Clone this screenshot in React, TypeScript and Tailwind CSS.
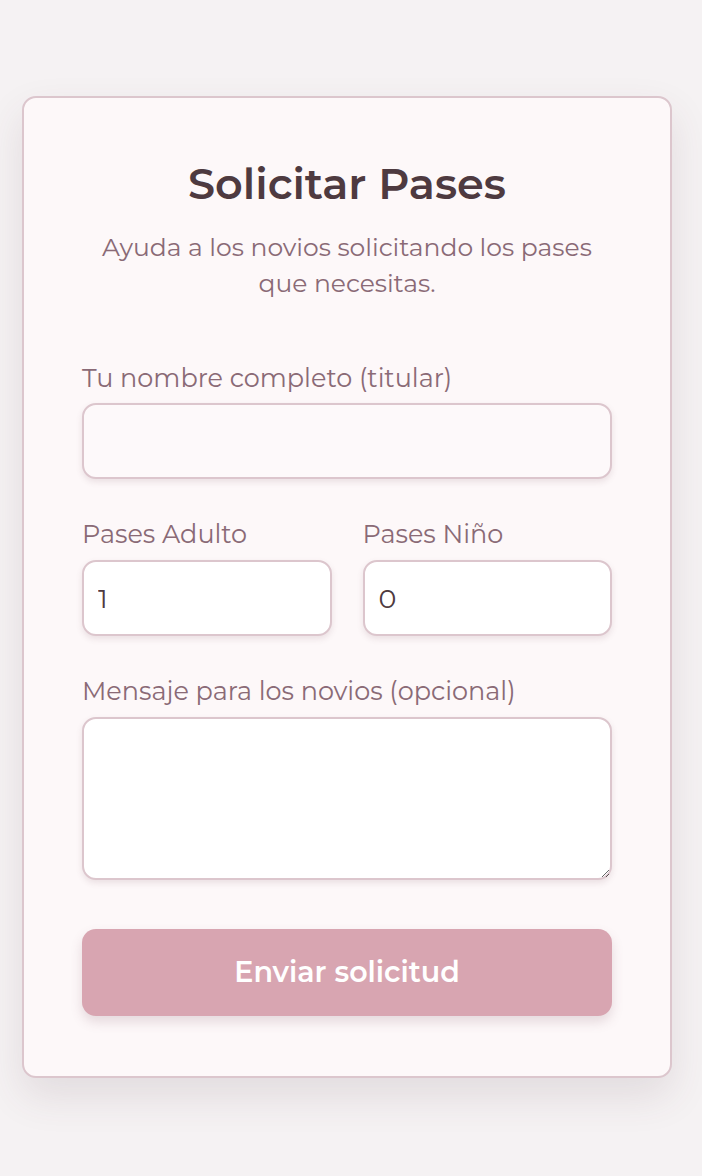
import React, { useState } from 'react';

const font = { fontFamily: 'Montserrat, Inter, "Noto Sans", sans-serif' };

const inputBase =
  'w-full rounded-[14px] border-2 border-[#dcc6cd] px-[14px] text-[27px] text-[#4e3a40] outline-none shadow-[0_3px_6px_rgba(120,80,95,0.14)] focus:border-[#d8a5b1]';

const labelCls = 'block text-[25.5px] leading-[34px] text-[#8a6a76]';

export default function App() {
  const [name, setName] = useState('');
  const [adults, setAdults] = useState('1');
  const [kids, setKids] = useState('0');
  const [message, setMessage] = useState('');

  return (
    <div className="min-h-screen bg-[#f5f2f3] pl-[22px] pt-[96px] pb-[100px]" style={font}>
      <div className="w-[650px] rounded-[14px] border-2 border-[#dcc6cd] bg-[#fdf8f9] px-[58px] pt-[58px] pb-[60px] shadow-[0_18px_40px_rgba(90,60,70,0.12)]">
        <h1 className="text-center text-[43px] leading-[56px] font-semibold text-[#4e3a40]">Solicitar Pases</h1>
        <p className="mx-auto mt-[17px] max-w-[510px] text-center text-[25px] leading-[36px] text-[#8a6a76]">
          Ayuda a los novios solicitando los pases que necesitas.
        </p>

        <form className="mt-[60px] flex flex-col" onSubmit={(e) => e.preventDefault()}>
          <label className={labelCls}>Tu nombre completo (titular)</label>
          <input
            value={name}
            onChange={(e) => setName(e.target.value)}
            className={`${inputBase} mt-[8px] h-[76px] bg-[#fdf9fa]`}
          />

          <div className="mt-[38px] grid grid-cols-2 gap-[31px]">
            <div>
              <label className={labelCls}>Pases Adulto</label>
              <input
                type="text"
                value={adults}
                onChange={(e) => setAdults(e.target.value)}
                className={`${inputBase} mt-[9px] h-[76px] bg-white`}
              />
            </div>
            <div>
              <label className={labelCls}>Pases Niño</label>
              <input
                type="text"
                value={kids}
                onChange={(e) => setKids(e.target.value)}
                className={`${inputBase} mt-[9px] h-[76px] bg-white`}
              />
            </div>
          </div>

          <label className={`${labelCls} mt-[38px]`}>Mensaje para los novios (opcional)</label>
          <textarea
            value={message}
            onChange={(e) => setMessage(e.target.value)}
            className={`${inputBase} mt-[9px] h-[163px] bg-white py-[12px]`}
          />

          <button
            type="submit"
            className="mt-[49px] h-[87px] w-full rounded-[14px] bg-[#d8a5b1] text-[28.5px] font-semibold text-white shadow-[0_6px_12px_rgba(120,80,95,0.18)]"
          >
            Enviar solicitud
          </button>
        </form>
      </div>
    </div>
  );
}
